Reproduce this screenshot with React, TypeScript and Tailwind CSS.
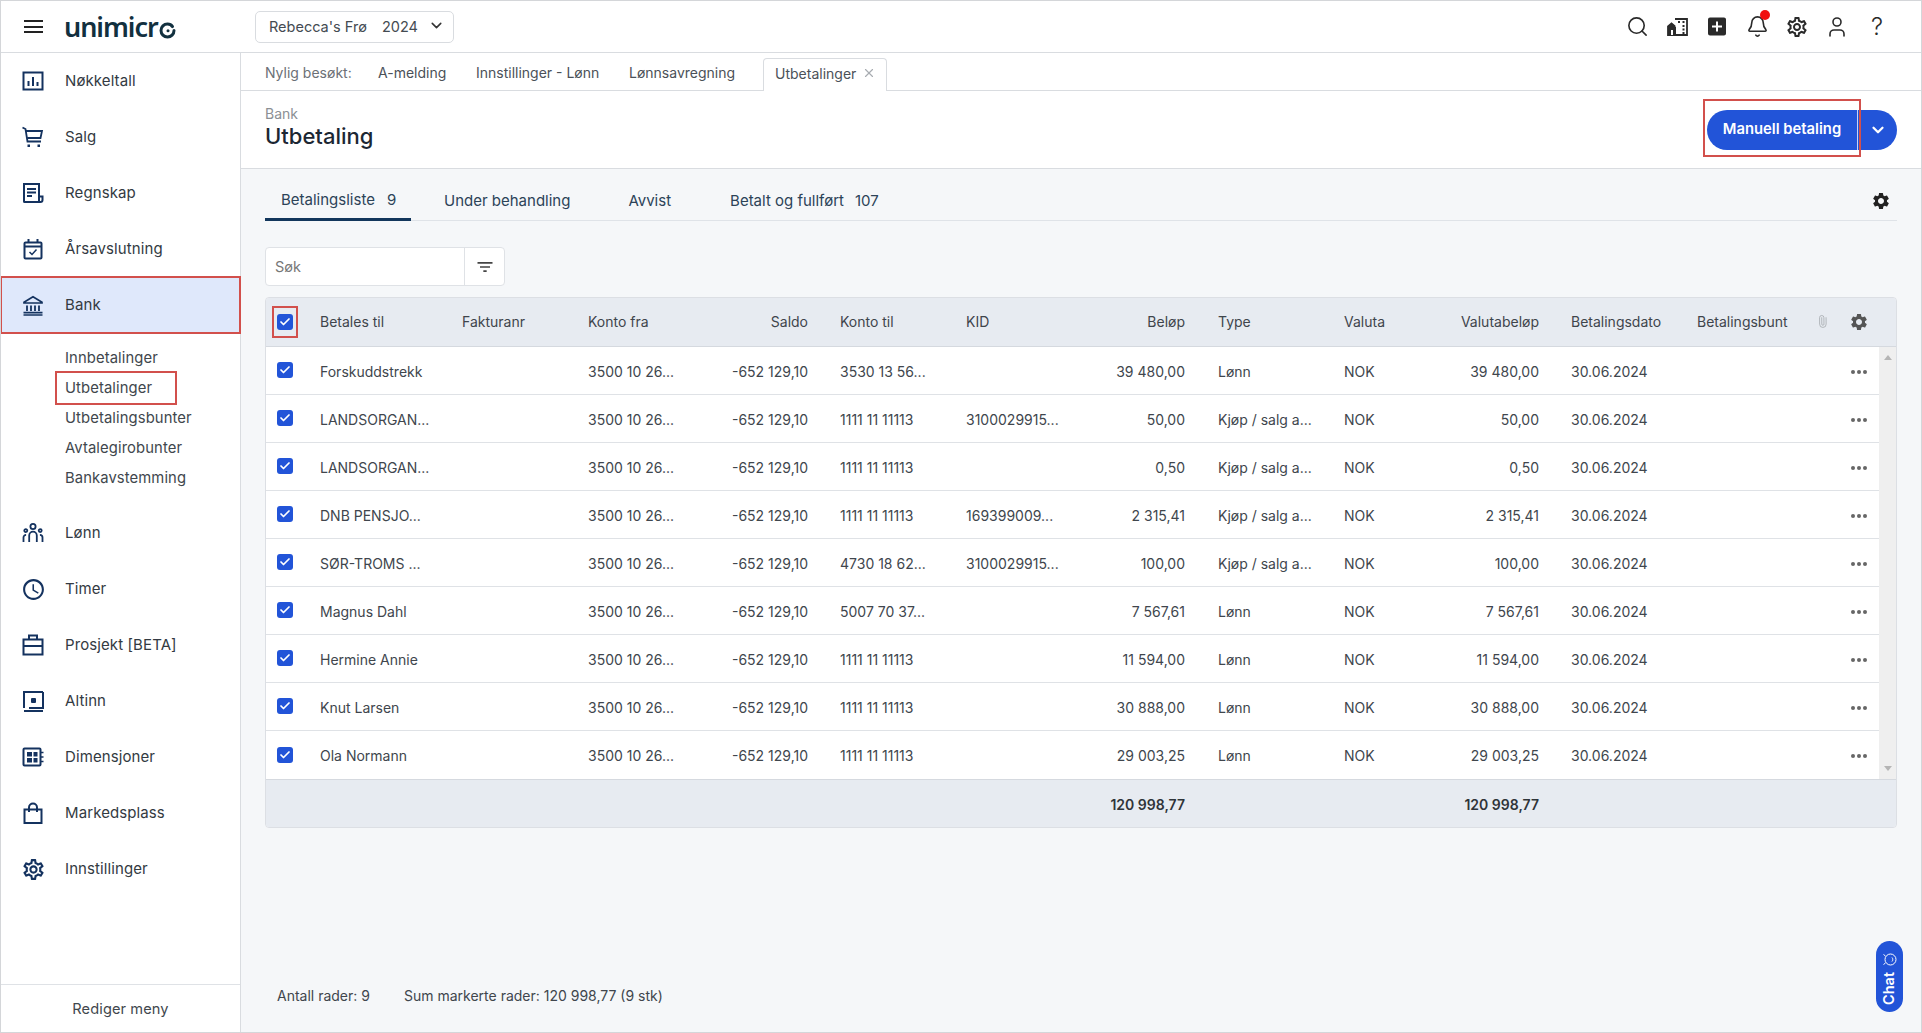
import React from "react";
import { X, Paperclip, Search, User, Bell, ChevronDown, Check } from "lucide-react";
import { MdOutlineSchedule, MdOutlineSettings, MdSettings, MdAddBox, MdFilterList } from "react-icons/md";

const FONT = "font-['Inter','Liberation_Sans',sans-serif]";
const GRID =
  "grid grid-cols-[38px_142px_126px_126px_126px_126px_125px_126px_127px_125px_102px_126px_126px_33px_38px]";

const Ico = ({ children }: { children: React.ReactNode }) => (
  <svg width="22" height="22" viewBox="0 0 22 22" fill="none" stroke="currentColor" strokeWidth="2">
    {children}
  </svg>
);

const NokkeltallIcon = () => (
  <Ico>
    <rect x="1.5" y="2.5" width="19" height="17" />
    <path d="M6.5 11v5M11 7v9M15.5 12v4" />
  </Ico>
);
const SalgIcon = () => (
  <Ico>
    <path d="M0.5 1.5 3.5 3l2 12.5h13.5" strokeWidth="1.8" />
    <path d="M4 5h16l-1.5 7H5.2" strokeWidth="1.8" />
    <rect x="5.5" y="18.5" width="2.5" height="2.5" fill="currentColor" stroke="none" />
    <rect x="15.5" y="18.5" width="2.5" height="2.5" fill="currentColor" stroke="none" />
  </Ico>
);
const RegnskapIcon = () => (
  <Ico>
    <path d="M17 20H2.5a.5.5 0 0 1-.5-.5V2h15v18Z" />
    <path d="M17 14.5h3.5v3.5a2 2 0 0 1-2 2H17" />
    <path d="M5 7h9M5 10.5h9M5 14h5" />
  </Ico>
);
const ArsavslutningIcon = () => (
  <Ico>
    <rect x="2.5" y="4.5" width="17" height="16" rx="1" />
    <path d="M2.5 8.5h17" />
    <path d="M6.5 1v4M15.5 1v4" />
    <path d="m7.5 14 2.5 2.5 4.5-5" strokeWidth="1.5" />
  </Ico>
);
const BankIcon = () => (
  <Ico>
    <path d="M2 8.2 11 2.8l9 5.4v.8H2v-.8Z" strokeWidth="1.7" />
    <path d="M5 11.5V17M9 11.5V17M13 11.5V17M17 11.5V17" strokeWidth="1.8" />
    <path d="M1.5 18.6h19M1.5 21h19" strokeWidth="1.6" />
  </Ico>
);
const LonnIcon = () => (
  <Ico>
    <circle cx="11" cy="4.5" r="2.6" strokeWidth="1.8" />
    <circle cx="3.8" cy="8.6" r="1.5" strokeWidth="1.8" />
    <circle cx="18.2" cy="8.6" r="1.5" strokeWidth="1.8" />
    <path d="M7.2 20v-6.5a3.8 3.8 0 0 1 7.6 0V20" strokeWidth="1.8" />
    <path d="M1.5 20v-4.5a2.6 2.6 0 0 1 2.6-2.6M20.5 20v-4.5a2.6 2.6 0 0 0-2.6-2.6" strokeWidth="1.8" />
  </Ico>
);
const ProsjektIcon = () => (
  <Ico>
    <rect x="1.5" y="5.5" width="19" height="15" />
    <path d="M7 5V1.5h8V5" />
    <path d="M1.5 12h19" />
  </Ico>
);
const AltinnIcon = () => (
  <Ico>
    <path d="M21 2H2v16M21 2v16H7M2 21h19" />
    <rect x="9" y="8" width="5" height="5" rx="1" fill="currentColor" stroke="none" />
  </Ico>
);
const DimensjonerIcon = () => (
  <Ico>
    <rect x="1.5" y="2.5" width="17" height="17" rx="1" />
    <rect x="5" y="6" width="5" height="4.5" fill="currentColor" stroke="none" />
    <rect x="11.5" y="6" width="4" height="4.5" fill="currentColor" stroke="none" />
    <rect x="5" y="12" width="5" height="4.5" fill="currentColor" stroke="none" />
    <rect x="11.5" y="12" width="4" height="4.5" fill="currentColor" stroke="none" />
    <path d="M19 6.5h2.5M19 11h2.5M19 15.5h2.5" strokeWidth="1.6" />
  </Ico>
);
const MarkedsplassIcon = () => (
  <Ico>
    <rect x="2.5" y="7.5" width="17" height="13.5" />
    <path d="M7 10V5.5a4 4 0 0 1 8 0V10" />
  </Ico>
);
const BedrifterIcon = () => (
  <svg width="21" height="18" viewBox="0 0 21 18" fill="none">
    <path d="M8 1h12v16H1V8.5l3.5-3 3.5 3" stroke="#2a2a2a" strokeWidth="1.8" />
    <path d="M1 9 5 5.5 9 9v8H1V9Z" fill="#2a2a2a" />
    <rect x="4" y="12" width="2" height="5" fill="white" />
    <path d="M11 4h2M15.5 4h2M15.5 8h2M15.5 11.5h2M15.5 15h2" stroke="#2a2a2a" strokeWidth="1.8" />
  </svg>
);
const LogoMark = () => (
  <svg width="17" height="17" viewBox="0 0 17 17" fill="none" stroke="#12303f" strokeWidth="3" strokeLinecap="round" className="ml-[1px] mt-[7px] shrink-0">
    <path d="M15 8.5a6.5 6.5 0 1 1-6.5-6.5c2.4 0 4 1 5 2.6" />
    <circle cx="9" cy="8.8" r="1.5" fill="#12303f" stroke="none" />
  </svg>
);

const menuTop = [
  { label: "Nøkkeltall", icon: <NokkeltallIcon /> },
  { label: "Salg", icon: <SalgIcon /> },
  { label: "Regnskap", icon: <RegnskapIcon /> },
  { label: "Årsavslutning", icon: <ArsavslutningIcon /> },
];
const menuBottom = [
  { label: "Lønn", icon: <LonnIcon /> },
  { label: "Timer", icon: <MdOutlineSchedule size={25} /> },
  { label: "Prosjekt [BETA]", icon: <ProsjektIcon /> },
  { label: "Altinn", icon: <AltinnIcon /> },
  { label: "Dimensjoner", icon: <DimensjonerIcon /> },
  { label: "Markedsplass", icon: <MarkedsplassIcon /> },
  { label: "Innstillinger", icon: <MdOutlineSettings size={25} /> },
];
const subMenu = ["Innbetalinger", "Utbetalinger", "Utbetalingsbunter", "Avtalegirobunter", "Bankavstemming"];

const rows = [
  ["Forskuddstrekk", "3530 13 56...", "", "39 480,00", "Lønn"],
  ["LANDSORGAN...", "1111 11 11113", "3100029915...", "50,00", "Kjøp / salg a..."],
  ["LANDSORGAN...", "1111 11 11113", "", "0,50", "Kjøp / salg a..."],
  ["DNB PENSJO...", "1111 11 11113", "169399009...", "2 315,41", "Kjøp / salg a..."],
  ["SØR-TROMS ...", "4730 18 62...", "3100029915...", "100,00", "Kjøp / salg a..."],
  ["Magnus Dahl", "5007 70 37...", "", "7 567,61", "Lønn"],
  ["Hermine Annie", "1111 11 11113", "", "11 594,00", "Lønn"],
  ["Knut Larsen", "1111 11 11113", "", "30 888,00", "Lønn"],
  ["Ola Normann", "1111 11 11113", "", "29 003,25", "Lønn"],
];

function MenuItem({ label, icon, active }: { label: string; icon: React.ReactNode; active?: boolean }) {
  return (
    <div className={`flex h-[56px] items-center ${active ? "bg-[#dfe8fb]" : ""}`}>
      <span className="flex w-[64px] justify-center text-[#14325f]">{icon}</span>
      <span className="text-[15px] tracking-[0.1px] text-[#333a42]">{label}</span>
    </div>
  );
}

function Checkbox() {
  return (
    <span className="flex h-[16px] w-[16px] items-center justify-center rounded-[3px] bg-[#2254d8]">
      <Check size={12} strokeWidth={3.5} className="text-white" />
    </span>
  );
}

function Cell({ children, right, type }: { children?: React.ReactNode; right?: boolean; type?: boolean }) {
  return (
    <div className={`truncate pr-[16px] ${right ? "text-right" : type ? "pl-[17px]" : "pl-[16px]"}`}>{children}</div>
  );
}

export default function App() {
  return (
    <div className={`relative flex h-screen w-full flex-col overflow-hidden border border-[#d4d6d9] bg-white ${FONT}`}>
      {/* top bar */}
      <header className="flex h-[52px] shrink-0 items-center border-b border-[#d9dce0]">
        <div className="ml-[23px] flex w-[19px] flex-col gap-[3.5px]">
          <span className="h-[2px] bg-[#222]" />
          <span className="h-[2px] bg-[#222]" />
          <span className="h-[2px] bg-[#222]" />
        </div>
        <div className="ml-[21px] flex h-[32px] w-[126px] items-center">
          <span className="text-[27px] font-semibold leading-none tracking-[-1.05px] text-[#12303f] font-['Noto_Sans',sans-serif]">unimicr</span>
          <LogoMark />
        </div>
        <div className="ml-[65px] flex h-[32px] w-[199px] items-center rounded-[5px] border border-[#d9dce0] pl-[13px] text-[14.5px] text-[#444b52]">
          <span className="w-[113px]">Rebecca's Frø</span>
          <span>2024</span>
          <ChevronDown size={17} strokeWidth={2.2} className="-mt-[2px] ml-[10px] text-[#333]" />
        </div>
        <div className="ml-auto mr-[32px] flex items-center gap-[16px] text-[#2a2a2a]">
          <span className="flex w-[24px] justify-center"><Search size={23} strokeWidth={1.7} /></span>
          <span className="flex w-[24px] justify-center"><BedrifterIcon /></span>
          <span className="flex w-[24px] justify-center"><MdAddBox size={25} /></span>
          <span className="relative flex w-[24px] justify-center">
            <Bell size={23} strokeWidth={1.7} />
            <span className="absolute right-[-1px] top-[-5px] h-[10px] w-[10px] rounded-full bg-[#f01010]" />
          </span>
          <span className="flex w-[24px] justify-center"><MdOutlineSettings size={24} /></span>
          <span className="flex w-[24px] justify-center"><User size={24} strokeWidth={1.6} /></span>
          <span className="flex w-[24px] justify-center"><span className="text-[24px] font-light leading-none">?</span></span>
        </div>
      </header>

      <div className="flex min-h-0 flex-1">
        {/* sidebar */}
        <aside className="flex w-[240px] shrink-0 flex-col border-r border-[#d9dce0] bg-white">
          {menuTop.map((m) => (
            <MenuItem key={m.label} label={m.label} icon={m.icon} />
          ))}
          <div className="relative z-10 outline-2 -outline-offset-1 outline-[#d2504c] outline">
            <MenuItem label="Bank" icon={<BankIcon />} active />
          </div>
          <div className="pb-[12px] pt-[10px]">
            {subMenu.map((s) => (
              <div key={s} className="flex h-[30px] items-center pl-[64px] text-[14.8px] tracking-[0.1px] text-[#41474d]">
                {s === "Utbetalinger" ? (
                  <span className="-ml-[10px] flex h-[34px] w-[122px] items-center border-2 border-[#d2504c] pl-[8px]">{s}</span>
                ) : (
                  s
                )}
              </div>
            ))}
          </div>
          {menuBottom.map((m) => (
            <MenuItem key={m.label} label={m.label} icon={m.icon} />
          ))}
          <div className="mt-auto flex h-[48px] items-center justify-center border-t border-[#dfe2e6] pt-[2px] text-[14.6px] tracking-[0.1px] text-[#41474d]">
            Rediger meny
          </div>
        </aside>

        {/* main */}
        <main className="flex min-w-0 flex-1 flex-col">
          <div className="flex h-[38px] shrink-0 items-end border-b border-[#d9dce0] pl-[24px] text-[14px] text-[#4b5158]">
            <span className="flex h-[36px] w-[113px] items-center text-[#6b7076]">Nylig besøkt:</span>
            <span className="flex h-[36px] w-[98px] items-center">A-melding</span>
            <span className="flex h-[36px] w-[153px] items-center">Innstillinger - Lønn</span>
            <span className="flex h-[36px] w-[134px] items-center">Lønnsavregning</span>
            <span className="-mb-[1px] flex h-[33px] w-[124px] items-center rounded-t-[4px] border border-b-0 border-[#d9dce0] bg-white pb-[4px] pl-[11px]">
              Utbetalinger
              <X size={14} className="ml-[6px] text-[#a8acb1]" />
            </span>
          </div>

          <div className="flex h-[78px] shrink-0 items-center justify-between border-b border-[#d9dce0] pl-[24px] pr-[24px]">
            <div className="mt-[-5px]">
              <div className="text-[14px] leading-[18px] text-[#8b8f94]">Bank</div>
              <div className="-mt-[1px] text-[22px] font-medium leading-[28px] text-[#1c2733]">Utbetaling</div>
            </div>
            <div className="relative flex h-[40px] text-white">
              <div className="flex w-[150px] items-center justify-center rounded-l-full bg-[#2254d8] text-[14.8px] font-semibold">Manuell betaling</div>
              <div className="flex w-[40px] items-center justify-center rounded-r-full border-l border-[#c9d4f2] bg-[#2254d8]">
                <ChevronDown size={18} strokeWidth={3} />
              </div>
              {/* red annotation over the button */}
              <div className="absolute left-[-4px] top-[-11px] h-[58px] w-[158px] border-2 border-[#d2504c]" />
            </div>
          </div>

          <div className="flex min-h-0 flex-1 flex-col bg-[#f5f7f9] px-[24px] pb-[26px]">
            {/* tabs */}
            <div className="flex h-[52px] shrink-0 items-stretch border-b border-[#dfe3e8] text-[15px] text-[#2c4358]">
              <div className="-mb-[1px] flex w-[146px] items-center border-b-[3px] border-[#12365c] pl-[16px] pt-[14px]">
                Betalingsliste<span className="ml-[12px]">9</span>
              </div>
              <div className="ml-[33px] flex items-center pt-[14px]">Under behandling</div>
              <div className="ml-[58px] flex items-center pt-[14px]">Avvist</div>
              <div className="ml-[59px] flex items-center pt-[14px]">
                Betalt og fullført<span className="ml-[11px]">107</span>
              </div>
              <span className="ml-auto mr-[6px] flex items-center pt-[12px]">
                <MdSettings size={20} className="text-[#222]" />
              </span>
            </div>

            {/* search */}
            <div className="mt-[26px] flex h-[39px] w-[240px] shrink-0 items-center rounded-[4px] border border-[#dfe2e6] bg-white text-[14.5px] text-[#777]">
              <span className="flex-1 pl-[9px]">Søk</span>
              <span className="flex h-full w-[40px] items-center justify-center border-l border-[#dfe2e6] text-[#444]">
                <MdFilterList size={20} />
              </span>
            </div>

            {/* table */}
            <div className="mt-[11px] shrink-0 overflow-hidden rounded-[4px] border border-[#dcdfe4] text-[14px] text-[#40464d]">
              <div className={`${GRID} h-[49px] items-center border-b border-[#d5d9df] bg-[#e7ebf1] pb-[1px] text-[#3f454c]`}>
                <div className="flex justify-center">
                  <span className="flex h-[32px] w-[26px] items-center justify-center border-2 border-[#d2504c]">
                    <Checkbox />
                  </span>
                </div>
                <Cell>Betales til</Cell>
                <Cell>Fakturanr</Cell>
                <Cell>Konto fra</Cell>
                <Cell right>Saldo</Cell>
                <Cell>Konto til</Cell>
                <Cell>KID</Cell>
                <Cell right>Beløp</Cell>
                <Cell type>Type</Cell>
                <Cell>Valuta</Cell>
                <Cell right>Valutabeløp</Cell>
                <Cell>Betalingsdato</Cell>
                <Cell>Betalingsbunt</Cell>
                <div className="flex justify-center pr-[2px]">
                  <Paperclip size={13} strokeWidth={1.5} className="-rotate-45 text-[#a9adb2]" />
                </div>
                <div className="flex justify-center">
                  <MdSettings size={20} className="text-[#555]" />
                </div>
              </div>

              <div className="relative bg-white">
                {rows.map((r, i) => (
                  <div key={i} className={`${GRID} h-[48px] items-center pt-[1px] ${i < rows.length - 1 ? "border-b border-[#dfe2e6]" : ""}`}>
                    <div className="-mt-[2px] flex justify-center">
                      <Checkbox />
                    </div>
                    <Cell>{r[0]}</Cell>
                    <Cell />
                    <Cell>3500 10 26...</Cell>
                    <Cell right>-652 129,10</Cell>
                    <Cell>{r[1]}</Cell>
                    <Cell>{r[2]}</Cell>
                    <Cell right>{r[3]}</Cell>
                    <Cell type>{r[4]}</Cell>
                    <Cell>NOK</Cell>
                    <Cell right>{r[3]}</Cell>
                    <Cell>30.06.2024</Cell>
                    <Cell />
                    <div />
                    <div className="mt-[1px] flex justify-center gap-[2px]">
                      <span className="h-[4px] w-[4px] rounded-full bg-[#666]" />
                      <span className="h-[4px] w-[4px] rounded-full bg-[#666]" />
                      <span className="h-[4px] w-[4px] rounded-full bg-[#666]" />
                    </div>
                  </div>
                ))}
                {/* scrollbar sits over the row ends */}
                <div className="absolute bottom-0 right-0 top-0 flex w-[17px] flex-col items-center justify-between bg-[#efefef] py-[8px]">
                  <span className="h-0 w-0 border-x-[4px] border-b-[5px] border-x-transparent border-b-[#b5b5b5]" />
                  <span className="h-0 w-0 border-x-[4px] border-t-[5px] border-x-transparent border-t-[#b5b5b5]" />
                </div>
              </div>

              <div className={`${GRID} h-[48px] items-center border-t border-[#d5d9df] bg-[#e7ebf1] pt-[2px] font-semibold text-[#2f3439]`}>
                <div />
                <div />
                <div />
                <div />
                <div />
                <div />
                <div />
                <Cell right>120 998,77</Cell>
                <div />
                <div />
                <Cell right>120 998,77</Cell>
              </div>
            </div>

            <div className="mt-auto flex pl-[12px] text-[14px] text-[#40464d]">
              <span className="w-[127px]">Antall rader: 9</span>
              <span>Sum markerte rader: 120 998,77 (9 stk)</span>
            </div>
          </div>
        </main>
      </div>

      {/* chat bubble */}
      <div className="absolute left-[1875px] top-[940px] flex h-[71px] w-[27px] items-center justify-center gap-[4px] rounded-full bg-[#2254d8] pb-[4px] text-white [writing-mode:vertical-rl] rotate-180">
        <span className="text-[14.5px] font-semibold leading-none">Chat</span>
        <svg width="15" height="15" viewBox="0 0 15 15" fill="none" stroke="white" strokeWidth="1" className="rotate-90">
          <circle cx="7.5" cy="8.5" r="5.5" />
          <path d="M4 3.5 2.5 1.5M11 3.5l1.5-2M5.5 10c1 1 3 1 4 0" />
        </svg>
      </div>
    </div>
  );
}
